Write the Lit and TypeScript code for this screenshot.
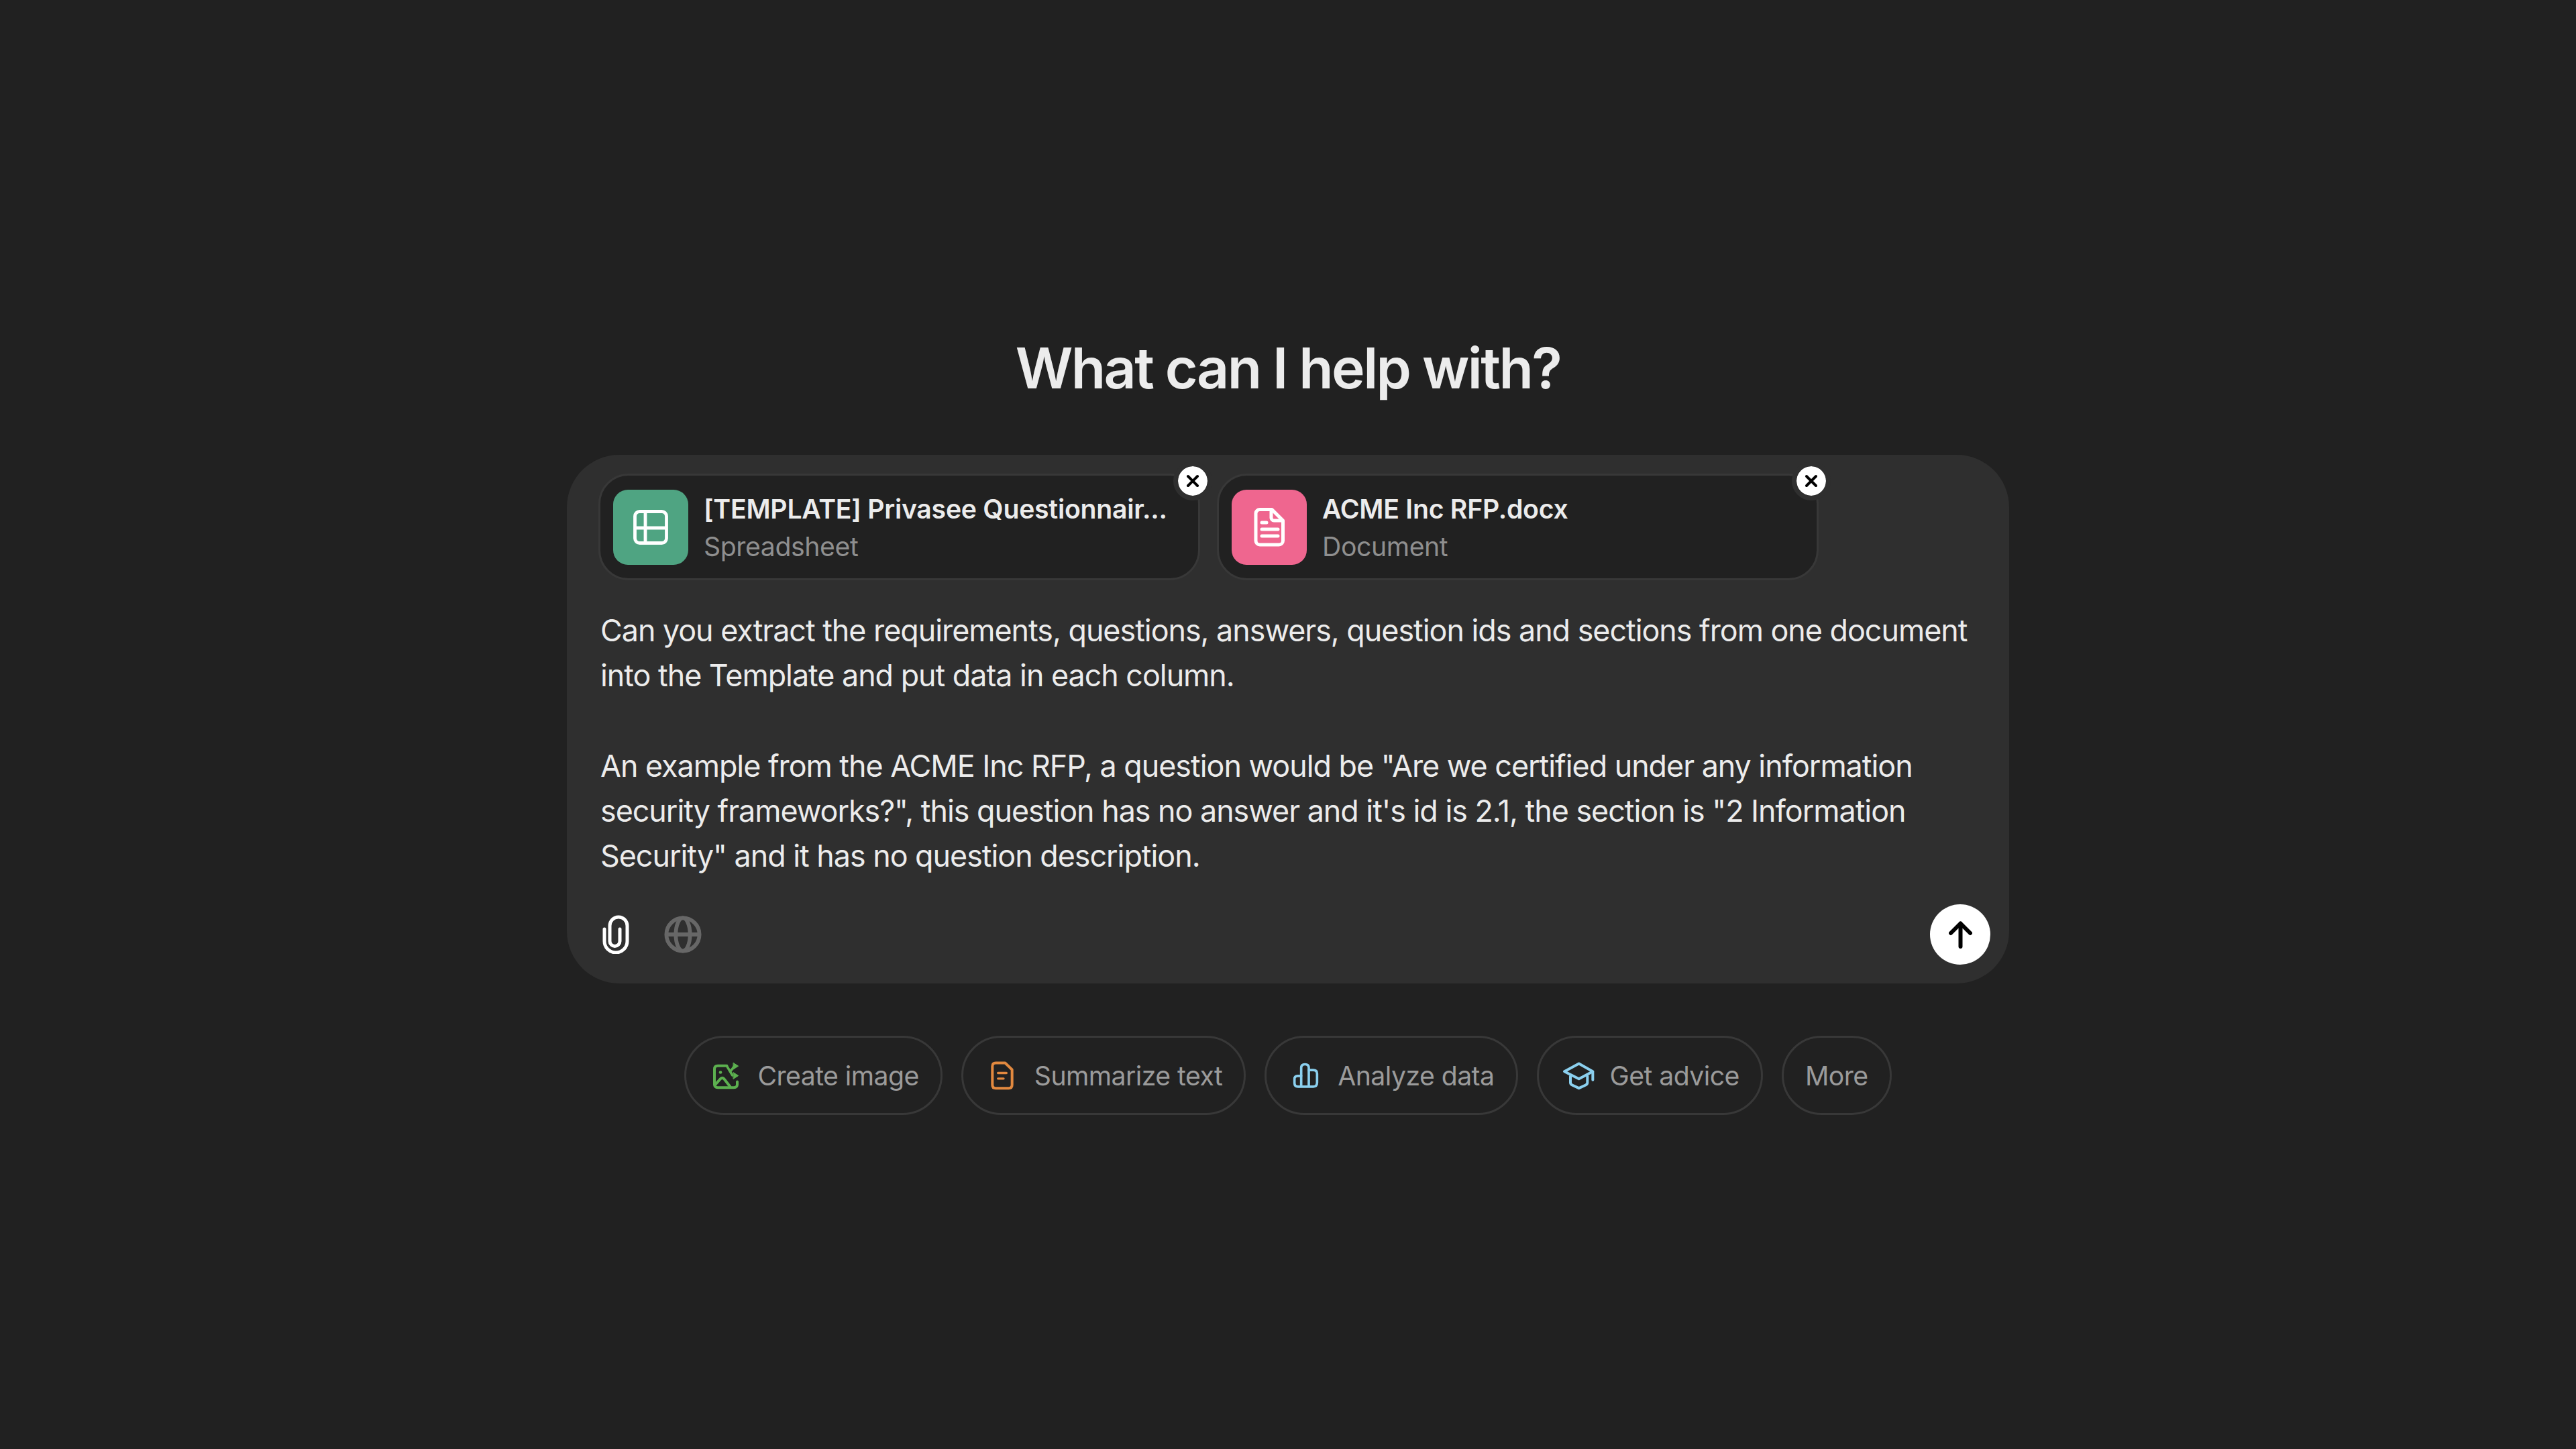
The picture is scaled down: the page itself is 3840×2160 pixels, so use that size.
import { LitElement, html, css, svg } from "lit";
import { customElement } from "lit/decorators.js";

const icons = {
  table: svg`<rect x="2.500" y="2.500" width="47" height="47" rx="7" fill="none" stroke="#fff" stroke-width="4.800"/><path d="M18 3v46M3 27h46" fill="none" stroke="#fff" stroke-width="4.800"/>`,
  doc: svg`<path d="M9 2.500h18L43.500 19v30a6 6 0 0 1-6 6H9a6 6 0 0 1-6-6V8.500a6 6 0 0 1 6-6z" fill="none" stroke="#fff" stroke-width="5" stroke-linejoin="round"/><path d="M26 3v12a4 4 0 0 0 4 4h13" fill="none" stroke="#fff" stroke-width="5"/><path d="M12 22h7M12 32h24M12 42h24" fill="none" stroke="#fff" stroke-width="5" stroke-linecap="round"/>`,
};

@customElement("app-root")
export class AppRoot extends LitElement {
  static styles = css`
    :host { display: block; height: 2160px; background: #212121; font-family: Inter, "Liberation Sans", sans-serif; overflow: hidden; }
    .page { display: flex; flex-direction: column; align-items: center; padding-top: 498px; }
    h1 { margin: 0 0 78px; font-size: 84px; line-height: 102px; font-weight: 600; color: #ececec; letter-spacing: -2.6px; }
    .card { width: 2150px; height: 788px; box-sizing: border-box; background: #2f2f2f; border-radius: 78px; padding: 28px 28px 28px 47px; display: flex; flex-direction: column; }
    .chips { display: flex; gap: 25px; }
    .chip { position: relative; box-sizing: border-box; width: 897px; height: 159px; background: #212121; border: 3px solid #383838; border-radius: 45px; display: flex; align-items: center; gap: 23px; padding-left: 19px; }
    .tile { width: 112px; height: 112px; border-radius: 22px; display: flex; align-items: center; justify-content: center; flex: none; }
    .green { background: #4fa482; }
    .pink { background: #ef668f; }
    .names { display: flex; flex-direction: column; min-width: 0; padding-top: 3px; }
    .title { font-size: 39.2px; line-height: 56px; font-weight: 600; color: #ececec; white-space: nowrap; letter-spacing: -0.25px; }
    .sub { font-size: 39.2px; line-height: 56px; color: #8f8f8f; letter-spacing: -0.4px; }
    .x { position: absolute; top: -14px; right: -14px; width: 44px; height: 44px; background: #fff; border-radius: 50%; outline: 7px solid #2f2f2f; display: flex; align-items: center; justify-content: center; }
    .text { margin: 42px 0 0 3px; width: 2080px; font-size: 44.8px; line-height: 67.2px; color: #ececec; white-space: pre-wrap; letter-spacing: -1px; }
    .bar { margin-top: auto; display: flex; align-items: center; }
    .clip { margin-left: 6px; }
    .globe { margin-left: 52px; }
    .send { margin-left: auto; width: 90px; height: 90px; background: #fff; border-radius: 50%; display: flex; align-items: center; justify-content: center; }
    .pills { margin-top: 78px; display: flex; gap: 28px; }
    .pill { box-sizing: border-box; height: 118px; padding: 0 32px; border: 3px solid #383838; border-radius: 59px; display: flex; align-items: center; gap: 18px; font-size: 39.2px; color: #9b9b9b; white-space: nowrap; letter-spacing: -0.55px; }
    svg { display: block; flex: none; }
  `;

  private chip(tile: string, icon: unknown, w: number, h: number, title: string, sub: string) {
    return html`<div class="chip">
      <div class="tile ${tile}"><svg width=${w} height=${h} viewBox="0 0 ${w} ${h}">${icon}</svg></div>
      <div class="names"><div class="title">${title}</div><div class="sub">${sub}</div></div>
      <div class="x"><svg width="20" height="20" viewBox="0 0 20 20"><path d="M3 3l14 14M17 3L3 17" stroke="#000" stroke-width="4" stroke-linecap="round"/></svg></div>
    </div>`;
  }

  render() {
    return html`<div class="page">
      <h1>What can I help with?</h1>
      <div class="card">
        <div class="chips">
          ${this.chip("green", icons.table, 52, 52, "[TEMPLATE] Privasee Questionnair...", "Spreadsheet")}
          ${this.chip("pink", icons.doc, 46, 58, "ACME Inc RFP.docx", "Document")}
        </div>
        <div class="text">Can you extract the requirements, questions, answers, question ids and sections from one document into the Template and put data in each column.

An example from the ACME Inc RFP, a question would be "Are we certified under any information security frameworks?", this question has no answer and it's id is 2.1, the section is "2 Information Security" and it has no question description.</div>
        <div class="bar">
          <svg class="clip" width="40" height="58" viewBox="0 0 40 58"><path d="M3 21v18a17 17 0 0 0 34 0V16a13 13 0 0 0-26 0v23a7.500 7.500 0 0 0 15 0V21" fill="none" stroke="#fff" stroke-width="5" stroke-linecap="round"/></svg>
          <svg class="globe" width="56" height="56" viewBox="0 0 58 58" fill="none" stroke="#676767" stroke-width="6"><circle cx="29" cy="29" r="25.500"/><ellipse cx="29" cy="29" rx="11" ry="25.500"/><path d="M4 29h50"/></svg>
          <div class="send"><svg width="35" height="41" viewBox="0 0 35 41"><path d="M17.500 38V3.500M3 18L17.500 3.500 32 18" fill="none" stroke="#000" stroke-width="6" stroke-linecap="round" stroke-linejoin="round"/></svg></div>
        </div>
      </div>
      <div class="pills">
        <div class="pill"><svg width="56" height="56" viewBox="15 13.500 168 168" fill="none" stroke="#5cb04f" stroke-width="12" stroke-linecap="round" stroke-linejoin="round"><path d="M100 55H60Q45 55 45 70V138Q45 152 60 152H132Q147 152 147 138V126"/><path d="M48 140L72 113Q80 105 88 113L115 148"/><circle cx="72" cy="84" r="7" fill="#5cb04f" stroke="none"/><path d="M100 55L125 97M118 78L135 55" stroke-width="11"/><path d="M130 42L152 56 130 70zM130 85L152 99 130 113z" fill="#5cb04f" stroke-width="3"/></svg>Create image</div>
        <div class="pill"><svg width="56" height="56" viewBox="21 13.500 168 168" fill="none" stroke="#e2893f" stroke-width="12" stroke-linecap="round" stroke-linejoin="round"><path d="M70 42H112L143 72V140Q143 155 128 155H70Q55 155 55 140V57Q55 42 70 42Z"/><path d="M80 87H118M80 112H105" stroke-width="10"/></svg>Summarize text</div>
        <div class="pill"><svg width="56" height="56" viewBox="15 13.500 168 168" fill="none" stroke="#8bd0ef" stroke-width="11" stroke-linecap="round" stroke-linejoin="round"><path d="M44 132V114Q44 100 58 100H74V64Q74 48 91 48Q108 48 108 64V74H128Q145 74 145 90V130Q145 148 128 148H60Q44 148 44 132Z"/><path d="M74 100V146M108 74V146"/></svg>Analyze data</div>
        <div class="pill"><svg width="56" height="56" viewBox="27 13.500 168 168" fill="none" stroke="#8bd0ef" stroke-width="12" stroke-linecap="round" stroke-linejoin="round"><path d="M110 45L172 80 110 113 45 80Z"/><path d="M172 82V118"/><path d="M72 102V130Q72 137 80 141L110 155 140 141Q148 137 148 130V102"/></svg>Get advice</div>
        <div class="pill">More</div>
      </div>
    </div>`;
  }
}
